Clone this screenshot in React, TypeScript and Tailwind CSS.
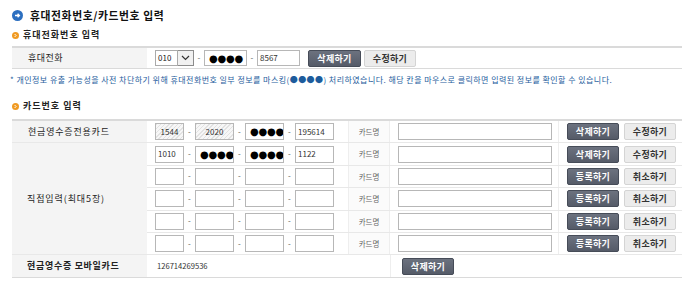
import clsx from 'clsx';

const HATCH =
  'bg-[repeating-linear-gradient(135deg,#e2e2e2_0px,#e2e2e2_1px,#f7f7f7_1px,#f7f7f7_3px)]';

type Cell = { v?: string; dots?: boolean; hatch?: boolean };

function TitleIcon() {
  return (
    <svg width="11" height="11" viewBox="0 0 11 11" className="shrink-0">
      <circle cx="5.5" cy="5.5" r="5.5" fill="#2c6fc0" />
      <path d="M3 5.5h4.2M5.6 3.8l1.8 1.7-1.8 1.7" stroke="#fff" strokeWidth="1.3" fill="none" />
    </svg>
  );
}

function SubIcon() {
  return (
    <svg width="7" height="7" viewBox="0 0 7 7" className="shrink-0">
      <circle cx="3.5" cy="3.5" r="3.5" fill="#f09a22" />
      <path d="M2.6 2l1.5 1.5-1.5 1.5" stroke="#fff" strokeWidth="1" fill="none" />
    </svg>
  );
}

function Btn({ label, dark, w = 'w-[52px]' }: { label: string; dark?: boolean; w?: string }) {
  return (
    <button
      className={clsx(
        'h-[17px] rounded-[2px] border text-[9px] font-bold leading-none tracking-[0.3px] shrink-0',
        w,
        dark
          ? 'border-[#464c58] bg-gradient-to-b from-[#6c727f] to-[#50566300] bg-[#555b68] text-white'
          : 'border-[#d4d4d4] bg-[#ececec] text-[#333]'
      )}
    >
      {label}
    </button>
  );
}

function Dots() {
  return <span className="font-['DejaVu_Sans',sans-serif] text-[10px] tracking-[-0.2px] text-black">●●●●</span>;
}

function Box({ w, cell, h = 'h-[17px]' }: { w: string; cell?: Cell; h?: string }) {
  return (
    <div
      className={clsx(
        'flex shrink-0 items-center overflow-hidden whitespace-nowrap border border-[#b7b7b7] text-[8px] text-[#333]',
        w,
        h,
        cell?.hatch ? clsx(HATCH, 'justify-center') : 'bg-white',
        cell?.dots ? 'pl-[4px]' : !cell?.hatch && 'pl-[2px]'
      )}
    >
      {cell?.dots ? <Dots /> : cell?.v}
    </div>
  );
}

function Dash({ w = 'w-[11px]' }: { w?: string }) {
  return <span className={clsx('shrink-0 text-center text-[8px] text-[#555]', w)}>-</span>;
}

function CardInputs({ cells }: { cells: Cell[] }) {
  return (
    <div className="flex w-[201px] items-center pl-[8px]">
      <Box w="w-[29px]" cell={cells[0]} />
      <Dash />
      <Box w="w-[39px]" cell={cells[1]} />
      <Dash />
      <Box w="w-[39px]" cell={cells[2]} />
      <Dash />
      <Box w="w-[39px]" cell={cells[3]} />
    </div>
  );
}

function CardRow({ cells, registered }: { cells: Cell[]; registered?: boolean }) {
  return (
    <div className="flex h-[22.4px] items-center border-b border-[#e8e8e8]">
      <CardInputs cells={cells} />
      <div className="flex h-full w-[42px] items-center justify-center border-x border-[#eeeeee] bg-[#fbfbfb] text-[7.5px] text-[#666]">
        카드명
      </div>
      <div className="flex w-[168px] items-center pl-[8px]">
        <Box w="w-[154px]" />
      </div>
      <div className="flex h-full flex-1 items-center gap-[5px] border-l border-[#eeeeee] pl-[8px]">
        {registered ? (
          <>
            <Btn label="삭제하기" dark />
            <Btn label="수정하기" />
          </>
        ) : (
          <>
            <Btn label="등록하기" dark />
            <Btn label="취소하기" />
          </>
        )}
      </div>
    </div>
  );
}

const EMPTY: Cell[] = [{}, {}, {}, {}];

export default function App() {
  return (
    <div className="h-[289px] w-[690px] bg-white pl-[12px] pr-[8px] pt-[6px] font-['Noto_Sans_CJK_KR',sans-serif] text-[#222]">
      <h1 className="flex h-[18px] items-center gap-[7px] text-[10.8px] font-bold tracking-[0.6px] text-[#111]">
        <TitleIcon />
        휴대전화번호/카드번호 입력
      </h1>

      <h2 className="mt-[4px] flex h-[14px] items-center gap-[4px] text-[9px] font-bold tracking-[1px]">
        <SubIcon />
        휴대전화번호 입력
      </h2>

      <div className="mt-[4px] flex h-[23px] items-center border-y border-[#dadada] border-t-2">
        <div className="flex h-full w-[135px] items-center bg-[#f4f4f4] pl-[16px] text-[9px] tracking-[0.5px]">
          휴대전화
        </div>
        <div className="flex items-center pl-[8px]">
          <div className="flex h-[16px] w-[39px] shrink-0">
            <div className="flex h-full w-[23px] items-center border border-[#aaaaaa] bg-white pl-[2px] text-[8px]">
              010
            </div>
            <div className="flex h-full w-[16px] items-center justify-center border border-l-0 border-[#8c8c8c] bg-[#f1f1f1]">
              <svg width="9" height="6" viewBox="0 0 9 6">
                <path d="M1 1l3.5 3.5L8 1" stroke="#333" strokeWidth="1.2" fill="none" />
              </svg>
            </div>
          </div>
          <Dash w="w-[10px]" />
          <Box w="w-[43px]" h="h-[16px]" cell={{ dots: true }} />
          <Dash w="w-[10px]" />
          <Box w="w-[43px]" h="h-[16px]" cell={{ v: '8567' }} />
          <div className="ml-[8px] flex gap-[3px]">
            <Btn label="삭제하기" dark w="w-[53px]" />
            <Btn label="수정하기" />
          </div>
        </div>
      </div>

      <p className="-ml-[2px] mt-[4px] flex h-[14px] items-center whitespace-nowrap text-[8px] tracking-[0.45px] text-[#1d5c9c]">
        * 개인정보 유출 가능성을 사전 차단하기 위해 휴대전화번호 일부 정보를 마스킹(●●●●) 처리하였습니다. 해당 칸을 마우스로 클릭하면 입력된 정보를 확인할 수 있습니다.
      </p>

      <h2 className="mt-[12px] flex h-[14px] items-center gap-[4px] text-[9px] font-bold tracking-[1px]">
        <SubIcon />
        카드번호 입력
      </h2>

      <div className="mt-[6px] border-t-2 border-[#dadada]">
        <div className="flex">
          <div className="flex h-[22.4px] w-[135px] items-center border-b border-[#e8e8e8] bg-[#f4f4f4] pl-[16px] text-[9px] tracking-[0.8px]">
            현금영수증전용카드
          </div>
          <div className="flex-1">
            <CardRow
              registered
              cells={[{ v: '1544', hatch: true }, { v: '2020', hatch: true }, { dots: true }, { v: '195614' }]}
            />
          </div>
        </div>

        <div className="flex">
          <div className="flex w-[135px] items-center border-b border-[#e8e8e8] bg-[#f4f4f4] pl-[15px] text-[9px] tracking-[0.9px]">
            직접입력(최대5장)
          </div>
          <div className="flex-1">
            <CardRow registered cells={[{ v: '1010' }, { dots: true }, { dots: true }, { v: '1122' }]} />
            <CardRow cells={EMPTY} />
            <CardRow cells={EMPTY} />
            <CardRow cells={EMPTY} />
            <CardRow cells={EMPTY} />
          </div>
        </div>

        <div className="flex h-[22.6px] items-center border-b border-[#dadada]">
          <div className="flex h-full w-[135px] items-center bg-[#f4f4f4] pl-[15px] text-[9px] font-bold tracking-[0.7px]">
            현금영수증 모바일카드
          </div>
          <div className="w-[243px] pl-[10px] text-[7.6px] text-[#333]">126714269536</div>
          <div className="flex h-full items-center border-l border-[#eeeeee] pl-[11px]">
            <Btn label="삭제하기" dark />
          </div>
        </div>
      </div>
    </div>
  );
}
